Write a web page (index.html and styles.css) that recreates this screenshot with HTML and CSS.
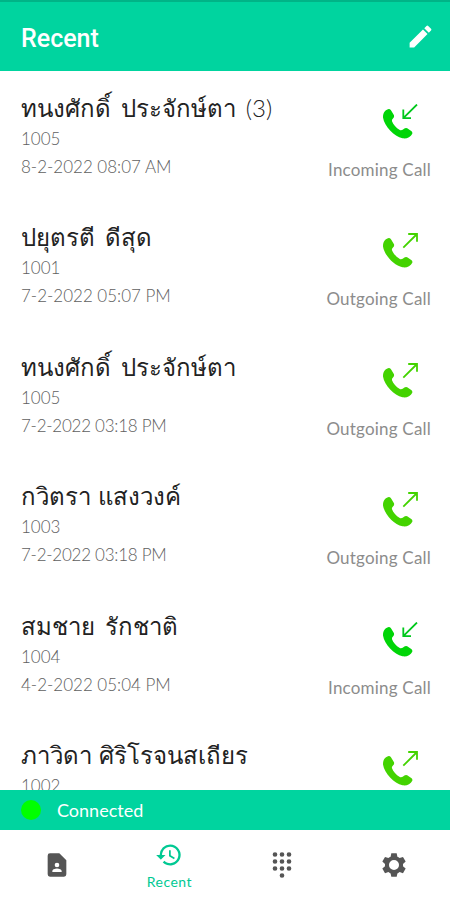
FILE: index.html
```
<!DOCTYPE html>
<html lang="th">
<head>
<meta charset="utf-8">
<meta name="viewport" content="width=device-width, initial-scale=1">
<title>Recent</title>
<link rel="stylesheet" href="styles.css">
</head>
<body>
<svg class="defs" aria-hidden="true">
  <symbol id="phone" viewBox="0 0 36 36">
    <path d="M6 5.2C3 6.2 1 8.600 1 13.500C2.500 22.500 12 32.500 20.500 34.300C24.500 34.900 28.500 33.500 30.300 29.700Q30.700 28.200 29.600 27.200L25.200 24.200Q23.700 23.500 22.400 24.500Q20 27 17.800 26C14 23.600 11.300 20.500 10 17.200Q9.500 15.600 11 14.400Q12.600 13 12 11.300L8.800 6Q7.500 4.500 6 5.200Z"/>
  </symbol>
  <symbol id="incoming" viewBox="0 0 36 36">
    <use href="#phone"/><path class="arrow" d="M35 0.500L21.300 14.200M21.300 5.500V14.200H29"/>
  </symbol>
  <symbol id="outgoing" viewBox="0 0 36 36">
    <use href="#phone"/><path class="arrow" d="M21.300 14.700L35 1M26.200 1H35V8.700"/>
  </symbol>
</svg>
<div class="app">
  <header class="header">
    <h1>Recent</h1>
    <svg class="edit" viewBox="0 0 24 24"><path d="M3 17.250V21h3.750L17.810 9.940l-3.750-3.750L3 17.250zM20.710 7.040a1 1 0 0 0 0-1.410l-2.340-2.340a1 1 0 0 0-1.410 0l-1.830 1.830 3.750 3.750 1.830-1.830z"/></svg>
  </header>
  <main class="calls">
    <article class="call">
      <div class="info"><h2>ทนงศักดิ์ ประจักษ์ตา (3)</h2><p class="number">1005</p><p class="date">8-2-2022 08:07 AM</p></div>
      <div class="status"><svg class="icon in"><use href="#incoming"/></svg><span>Incoming Call</span></div>
    </article>
    <article class="call">
      <div class="info"><h2>ปยุตรตี ดีสุด</h2><p class="number">1001</p><p class="date">7-2-2022 05:07 PM</p></div>
      <div class="status"><svg class="icon out"><use href="#outgoing"/></svg><span>Outgoing Call</span></div>
    </article>
    <article class="call">
      <div class="info"><h2>ทนงศักดิ์ ประจักษ์ตา</h2><p class="number">1005</p><p class="date narrow">7-2-2022 03:18 PM</p></div>
      <div class="status"><svg class="icon out"><use href="#outgoing"/></svg><span>Outgoing Call</span></div>
    </article>
    <article class="call">
      <div class="info"><h2 class="tight">กวิตรา แสงวงค์</h2><p class="number">1003</p><p class="date narrow">7-2-2022 03:18 PM</p></div>
      <div class="status"><svg class="icon out"><use href="#outgoing"/></svg><span>Outgoing Call</span></div>
    </article>
    <article class="call">
      <div class="info"><h2>สมชาย รักชาติ</h2><p class="number">1004</p><p class="date">4-2-2022 05:04 PM</p></div>
      <div class="status"><svg class="icon in"><use href="#incoming"/></svg><span>Incoming Call</span></div>
    </article>
    <article class="call">
      <div class="info"><h2 class="tight">ภาวิดา ศิริโรจนสเถียร</h2><p class="number">1002</p></div>
      <div class="status"><svg class="icon out"><use href="#outgoing"/></svg></div>
    </article>
  </main>
  <div class="connection"><i class="dot"></i><span>Connected</span></div>
  <nav class="tabs">
    <a class="tab"><svg viewBox="0 0 24 24"><path d="M14 2H6a2 2 0 0 0-2 2v16a2 2 0 0 0 2 2h12a2 2 0 0 0 2-2V8l-6-6zm-2 8a2 2 0 1 1 0 4 2 2 0 0 1 0-4zm4 8H8v-.570c0-.810.480-1.530 1.220-1.850a6.950 6.950 0 0 1 5.560 0A2.010 2.010 0 0 1 16 17.430V18z"/></svg></a>
    <a class="tab active"><svg viewBox="0 0 24 24"><path d="M13 3a9 9 0 0 0-9 9H1l3.890 3.890.070.140L9 12H6a7 7 0 1 1 2.060 4.940l-1.420 1.420A9 9 0 1 0 13 3zm-1 5v5l4.280 2.540.720-1.210-3.500-2.080V8H12z"/></svg><span>Recent</span></a>
    <a class="tab"><svg viewBox="0 0 24 24"><path d="M12 19a2 2 0 1 0 0 4 2 2 0 0 0 0-4zM6 1a2 2 0 1 0 0 4 2 2 0 0 0 0-4zm0 6a2 2 0 1 0 0 4 2 2 0 0 0 0-4zm0 6a2 2 0 1 0 0 4 2 2 0 0 0 0-4zm12-8a2 2 0 1 0 0-4 2 2 0 0 0 0 4zm-6 8a2 2 0 1 0 0 4 2 2 0 0 0 0-4zm6 0a2 2 0 1 0 0 4 2 2 0 0 0 0-4zm0-6a2 2 0 1 0 0 4 2 2 0 0 0 0-4zm-6 0a2 2 0 1 0 0 4 2 2 0 0 0 0-4zm0-6a2 2 0 1 0 0 4 2 2 0 0 0 0-4z"/></svg></a>
    <a class="tab"><svg viewBox="0 0 24 24"><path fill-rule="evenodd" d="M9.700 2h4.600l.600 3a7.500 7.500 0 0 1 1.900 1.100l2.900-1 2.300 4-2.300 2a7.500 7.500 0 0 1 0 2l2.300 2-2.300 4-2.900-1a7.500 7.500 0 0 1-1.900 1.100l-.600 2.800H9.700l-.600-2.800a7.500 7.500 0 0 1-1.900-1.100l-2.900 1-2.300-4 2.300-2a7.500 7.500 0 0 1 0-2L2 9.100l2.300-4 2.900 1A7.500 7.500 0 0 1 9.100 5zM12 7.700a4.300 4.300 0 1 0 0 8.600 4.300 4.300 0 0 0 0-8.600z"/></svg></a>
  </nav>
</div>
</body>
</html>
```
FILE: styles.css
```
* { box-sizing: border-box; }
body { margin: 0; background: #fff; font-family: Lato, "Noto Sans", sans-serif; }
h1, h2, p { margin: 0; font-weight: 400; }
.defs { position: absolute; width: 0; height: 0; }
.app { display: flex; flex-direction: column; width: 450px; height: 900px; overflow: hidden; }
.header { flex: 0 0 71px; display: flex; align-items: center; justify-content: space-between; padding: 5px 15px 0 21px; background: #00d49f; border-top: 2px solid #00b487; color: #fff; }
.header h1 { font: 500 25px/30px Roboto, sans-serif; }
.edit { width: 29px; height: 29px; margin-bottom: 5px; fill: #fff; }
.calls { flex: 0 0 719px; overflow: hidden; }
.call { display: flex; justify-content: space-between; height: 129.4px; padding: 19px 19px 0 21px; }
.info { white-space: nowrap; }
.info h2 { height: 37px; font-size: 24px; font-weight: 300; line-height: 36px; word-spacing: 3px; letter-spacing: 0.05px; color: #222; }
.info .tight { word-spacing: 0; letter-spacing: 0; }
.number, .date { font-size: 17px; font-weight: 300; line-height: 24px; color: #606060; }
.date { margin-top: 4px; }
.narrow { letter-spacing: -0.25px; }
.status { display: flex; flex-direction: column; align-items: flex-end; padding-top: 14px; font-size: 17px; line-height: 24px; color: #8c8c8c; }
.icon { width: 36px; height: 36px; margin-right: 13px; overflow: visible; }
.status span { margin-top: 18px; letter-spacing: 0.2px; }
.in { fill: #00d507; stroke: #00c81c; }
.out { fill: #43d300; stroke: #43d300; }
#phone path { stroke: none; }
.arrow { fill: none; stroke-width: 1.8; }
.connection { flex: 0 0 40px; display: flex; align-items: center; gap: 16px; padding: 0 0 1px 21px; background: #00d49f; color: #fff; font-size: 18px; }
.dot { width: 20px; height: 20px; border-radius: 50%; background: #00ff00; }
.tabs { flex: 1; display: grid; grid-template-columns: repeat(4, 1fr); padding-left: 1px; }
.tab { display: flex; flex-direction: column; align-items: center; justify-content: center; color: #555; }
.tab svg { width: 28px; height: 28px; fill: currentColor; }
.active { color: #00c993; font-size: 14px; line-height: 18px; padding-top: 1px; }
.active span { margin-top: 4px; letter-spacing: 0.5px; }
```
